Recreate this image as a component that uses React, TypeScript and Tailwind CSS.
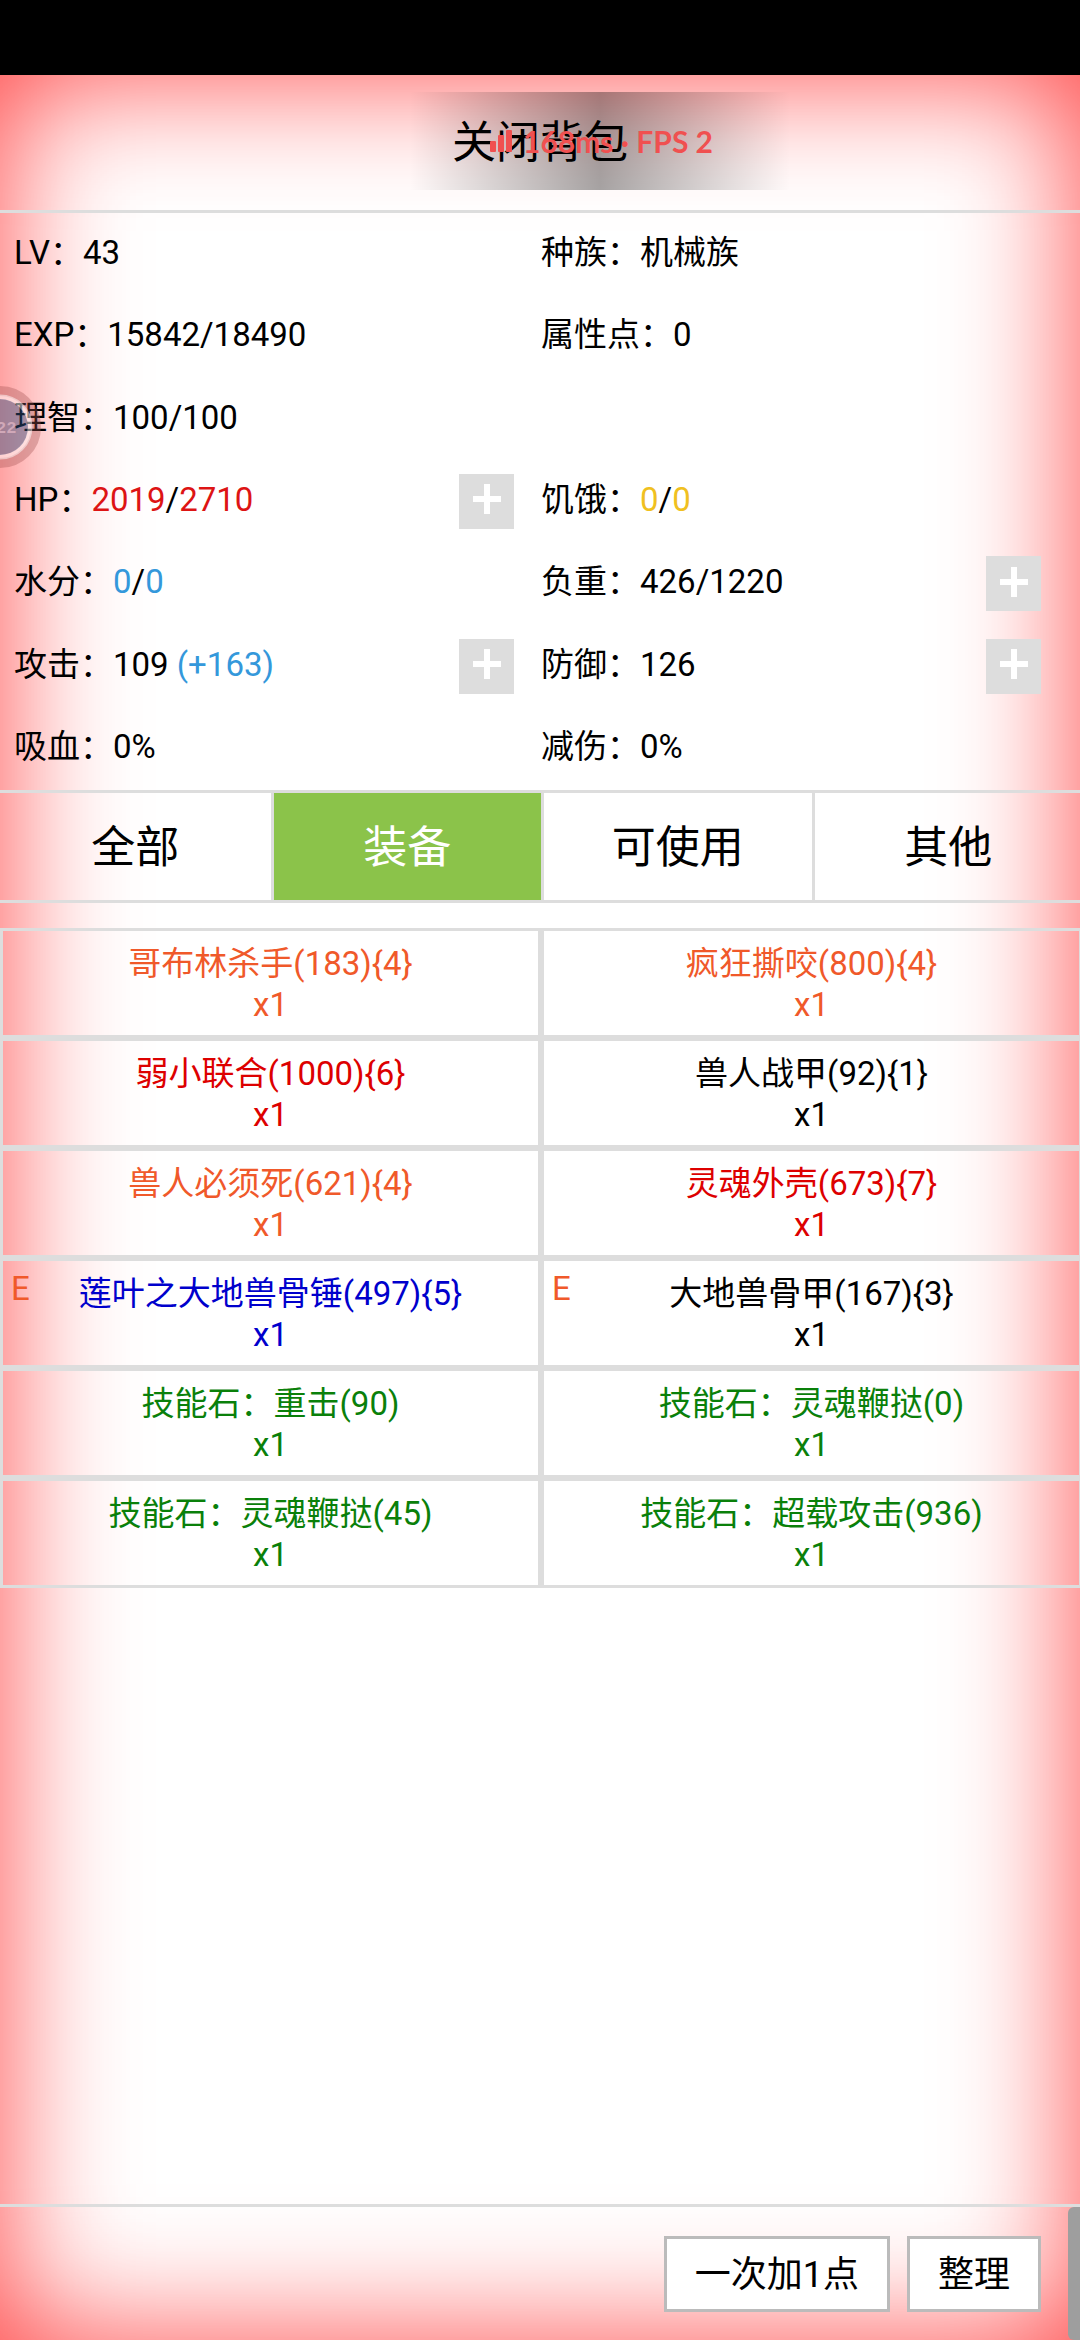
import { useState } from 'react';

const stats = [
  { label: 'LV', value: <>43</> },
  { label: '种族', value: <>机械族</> },
  { label: 'EXP', value: <>15842/18490</> },
  { label: '属性点', value: <>0</> },
  { label: '理智', value: <>100/100</>, wide: true },
  {
    label: 'HP',
    value: (
      <>
        <span className="text-[#dd1414]">2019</span>/<span className="text-[#dd1414]">2710</span>
      </>
    ),
    add: true,
  },
  {
    label: '饥饿',
    value: (
      <>
        <span className="text-[#f0c020]">0</span>/<span className="text-[#f0c020]">0</span>
      </>
    ),
  },
  {
    label: '水分',
    value: (
      <>
        <span className="text-[#3498db]">0</span>/<span className="text-[#3498db]">0</span>
      </>
    ),
  },
  { label: '负重', value: <>426/1220</>, add: true },
  {
    label: '攻击',
    value: (
      <>
        109 <span className="text-[#3498db]">(+163)</span>
      </>
    ),
    add: true,
  },
  { label: '防御', value: <>126</>, add: true },
  { label: '吸血', value: <>0%</> },
  { label: '减伤', value: <>0%</> },
];

const tabs = ['全部', '装备', '可使用', '其他'];

const items = [
  { name: '哥布林杀手(183){4}', color: 'text-[#f0592a]' },
  { name: '疯狂撕咬(800){4}', color: 'text-[#f0592a]' },
  { name: '弱小联合(1000){6}', color: 'text-[#dd0000]' },
  { name: '兽人战甲(92){1}', color: 'text-black' },
  { name: '兽人必须死(621){4}', color: 'text-[#f0592a]' },
  { name: '灵魂外壳(673){7}', color: 'text-[#dd0000]' },
  { name: '莲叶之大地兽骨锤(497){5}', color: 'text-[#0000cc]', equipped: true },
  { name: '大地兽骨甲(167){3}', color: 'text-black', equipped: true },
  { name: '技能石：重击(90)', color: 'text-[#0a800a]' },
  { name: '技能石：灵魂鞭挞(0)', color: 'text-[#0a800a]' },
  { name: '技能石：灵魂鞭挞(45)', color: 'text-[#0a800a]' },
  { name: '技能石：超载攻击(936)', color: 'text-[#0a800a]' },
];

function AddButton({ label }: { label: string }) {
  return (
    <button aria-label={`增加${label}`} className="flex size-[55px] items-center justify-center bg-[#ddd] pb-1">
      <svg width="28" height="30" viewBox="0 0 28 30" fill="#fff">
        <path d="M11 0h6v12h11v6H17v12h-6V18H0v-6h11z" />
      </svg>
    </button>
  );
}

function NetworkOverlay() {
  return (
    <div className="pointer-events-none absolute top-[17px] left-[410px] flex h-[98px] w-[380px]">
      <div className="flex-1 bg-linear-to-r from-transparent to-black/35" />
      <div className="flex-1 bg-linear-to-r from-black/35 to-transparent" />
      <div className="absolute inset-0 flex items-center gap-[10px] pl-20 font-['Lato'] text-[30px] font-bold whitespace-pre text-[#f05050]">
        <svg width="23" height="22" viewBox="0 0 23 22" fill="currentColor">
          <rect x="0" y="11" width="6" height="11" rx="1" />
          <rect x="8" y="5" width="6" height="17" rx="1" />
          <rect x="16" y="0" width="6" height="22" rx="1" />
        </svg>
        168ms · FPS 2
      </div>
    </div>
  );
}

function FloatingBall() {
  return (
    <svg className="pointer-events-none absolute top-[311px] left-0" width="42" height="82" viewBox="0 0 42 82">
      <circle cx="0" cy="41" r="36" fill="none" stroke="#a05050" strokeOpacity="0.35" strokeWidth="10" />
      <circle cx="0" cy="41" r="30" fill="none" stroke="#fff" strokeOpacity="0.5" strokeWidth="5" />
      <circle cx="0" cy="41" r="28" fill="#305080" fillOpacity="0.45" />
      <text x="-4" y="47" fontSize="17" fontFamily="Liberation Mono" fontWeight="bold" fill="#d0a8b8">22</text>
    </svg>
  );
}

export default function App() {
  const [tab, setTab] = useState('装备');

  return (
    <div className="flex min-h-screen flex-col bg-black pt-[75px] font-['Roboto','Noto_Sans_CJK_SC',sans-serif] text-[33px] leading-[41px] text-black">
      <main className="relative flex flex-1 flex-col overflow-x-clip bg-white shadow-[inset_0_0_130px_rgba(255,0,0,0.75)]">
        <header className="flex h-[138px] border-b-3 border-[#ddd]">
          <button className="flex-1 pt-[2px] text-[44px]">关闭背包</button>
        </header>

        <dl className="grid h-[577px] grid-cols-2 grid-rows-7 pl-[14px] pr-3">
          {stats.map((s) => (
            <div key={s.label} className={s.wide ? 'col-span-2 flex items-center' : 'flex items-center pr-[27px]'}>
              <dt className="pb-1">{s.label}：</dt>
              <dd className="flex flex-1 items-center justify-between">
                <span className="pb-1">{s.value}</span>
                {s.add && <AddButton label={s.label} />}
              </dd>
            </div>
          ))}
        </dl>

        <nav className="-mr-[2px] grid grid-cols-4 border-y-3 border-[#ddd]">
          {tabs.map((t) => (
            <button
              key={t}
              onClick={() => setTab(t)}
              className={`h-[107px] border-l-3 border-[#ddd] pt-[3px] text-[44px] first:border-l-0 ${
                t === tab ? 'bg-[#8bc34a] text-white' : ''
              }`}
            >
              {t}
            </button>
          ))}
        </nav>

        <ul className="mt-[25px] -mr-[2px] grid grid-cols-2">
          {items.map((item) => (
            <li key={item.name}>
              <button className={`relative h-[110px] w-full border-3 border-[#ddd] pt-[2px] ${item.color}`}>
                {item.equipped && <span className="absolute top-[7px] left-2 text-[#f0592a]">E</span>}
                <span className="block">{item.name}</span>
                <span className="block">x1</span>
              </button>
            </li>
          ))}
        </ul>

        <footer className="mt-auto flex h-[136px] items-center justify-end gap-[17px] border-t-3 border-[#ddd] pr-[39px] text-[36px]">
          <button className="h-[76px] border-3 border-[#bbb] bg-white px-7 pt-1">一次加1点</button>
          <button className="h-[76px] border-3 border-[#bbb] bg-white px-7 pt-1">整理</button>
        </footer>

        <div className="absolute right-0 bottom-0 h-[133px] w-3 rounded-l-md bg-[#9e9e9e]" />
        <NetworkOverlay />
        <FloatingBall />
      </main>
    </div>
  );
}
